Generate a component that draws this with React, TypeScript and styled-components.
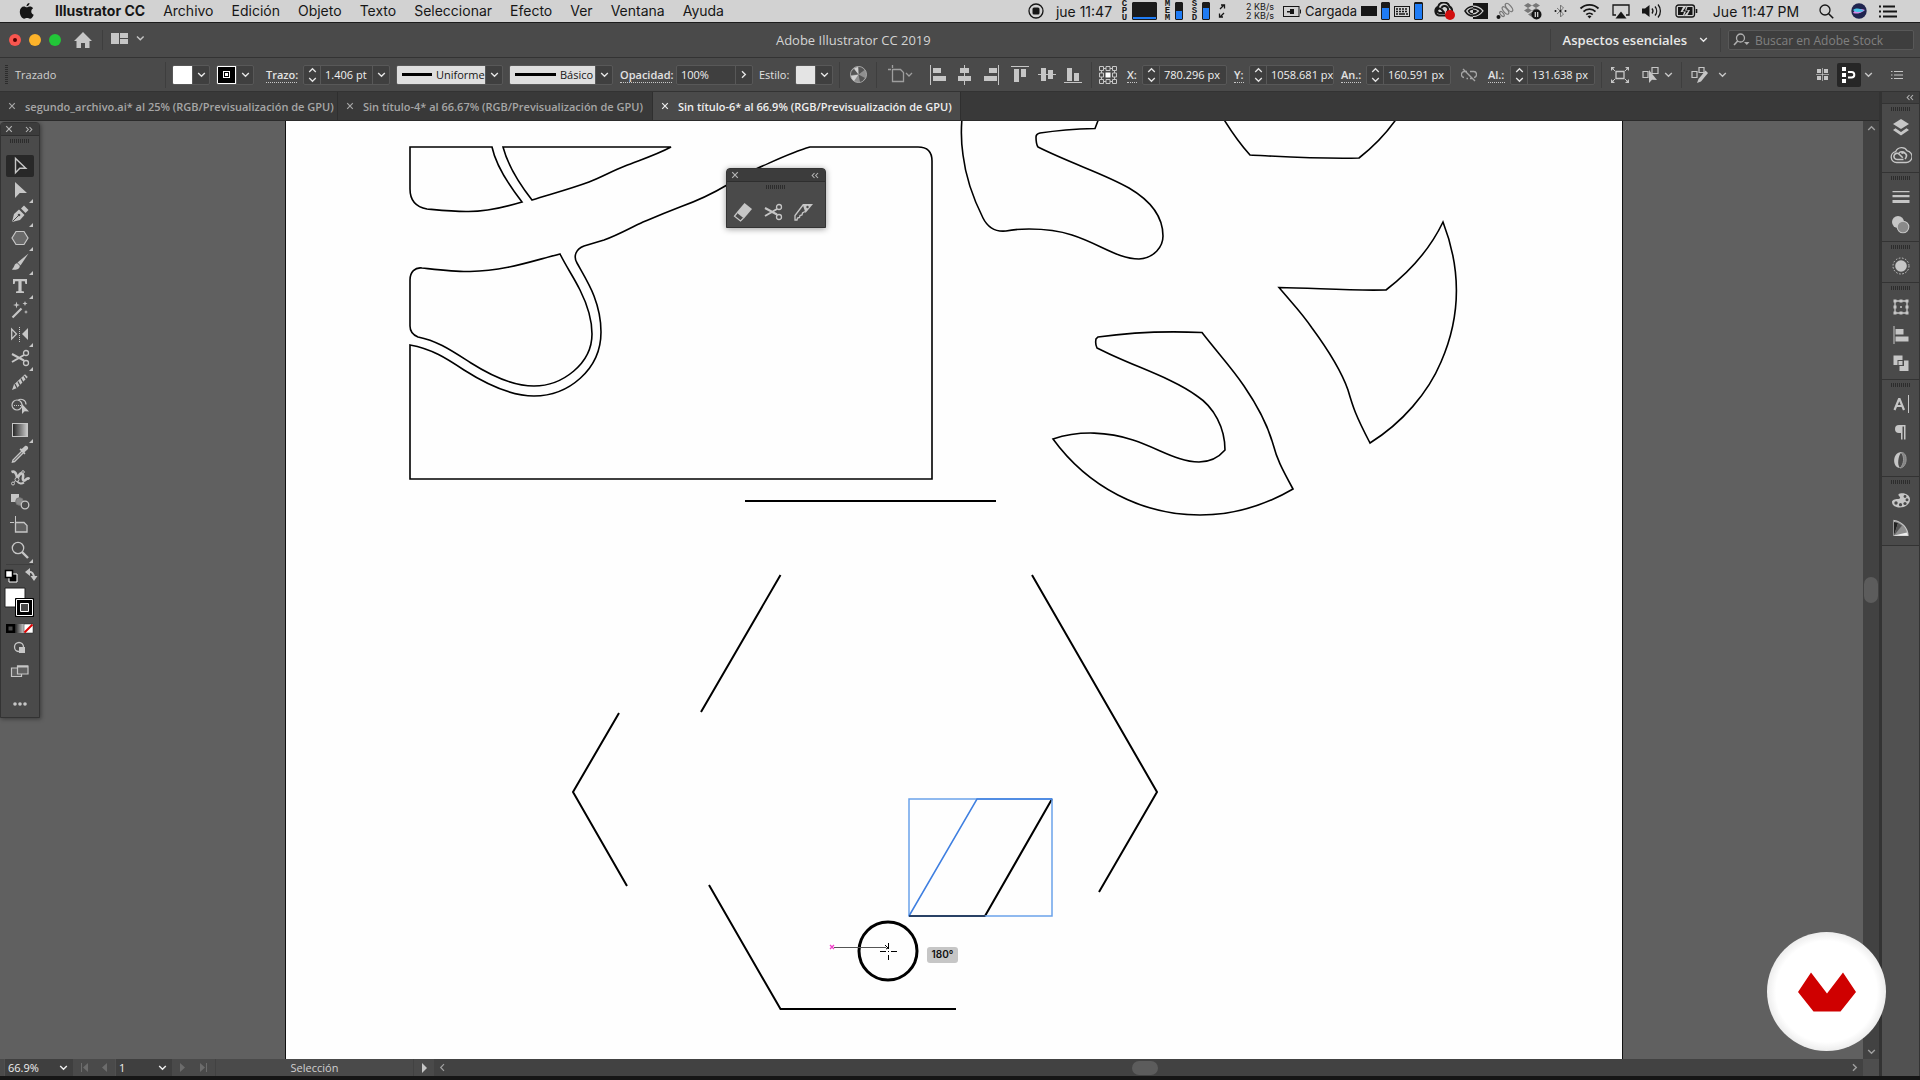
import React from 'react';
import styled, { createGlobalStyle } from 'styled-components';

const ui = '"Open Sans", "Noto Sans", sans-serif';
const mac = 'Inter, Roboto, "Liberation Sans", sans-serif';
const ink = '#c6c6c6';

const Global = createGlobalStyle`
  * { box-sizing: border-box; }
  html, body { margin: 0; height: 100%; background: #161616; overflow: hidden; }
  button, input, select { font: inherit; color: inherit; margin: 0; padding: 0; border: 0; background: none; border-radius: 0; outline: 0; }
  svg { display: block; flex: none; }
`;

const Screen = styled.div`
  display: flex;
  flex-direction: column;
  height: 100vh;
  padding-bottom: 4px;
  background: #161616;
  font-family: ${ui};
  font-size: 12px;
  color: #e2e2e2;
`;

/* ---------- system menu bar ---------- */
const MenuBar = styled.header`
  display: flex;
  align-items: center;
  height: 23px;
  padding: 0 23px 0 18px;
  background: #d2d2d2;
  border-bottom: 1px solid #1c1c1c;
  color: #161616;
  font-family: ${mac};
  font-size: 14px;
`;
const MenuNav = styled.nav`
  display: flex;
  flex: 1;
  gap: 18px;
  margin-left: 20px;
`;
const MenuItem = styled.button<{ $bold?: boolean }>`
  font-weight: ${p => (p.$bold ? 700 : 400)};
  line-height: 22px;
  white-space: nowrap;
`;
const Slot = styled.div<{ $w: number; $gap?: number; $small?: boolean }>`
  display: flex;
  flex: none;
  align-items: center;
  justify-content: center;
  width: ${p => p.$w}px;
  margin-left: ${p => p.$gap ?? 0}px;
  font-size: ${p => (p.$small ? 13 : 14)}px;
  white-space: nowrap;
`;
const Stack = styled(Slot)`
  flex-direction: column;
  font-family: "Liberation Mono", monospace;
  font-size: 9px;
  font-weight: 700;
  line-height: 7px;
`;
const Rates = styled(Slot)`
  flex-direction: column;
  font-size: 9px;
  line-height: 9px;
`;
const Meter = styled.div<{ $w: number; $fill: number; $gap: number }>`
  flex: none;
  width: ${p => p.$w}px;
  height: 18px;
  margin-left: ${p => p.$gap}px;
  background: linear-gradient(to top, #1f7cf5 ${p => p.$fill}%, #1b1b1b ${p => p.$fill}%);
  border: 1px solid #1b1b1b;
  border-radius: 1px;
`;

/* ---------- title bar ---------- */
const TitleBar = styled.div`
  display: flex;
  align-items: center;
  height: 35px;
  padding: 0 6px 0 9px;
  background: #4a4a4a;
  border-bottom: 1px solid #333;
`;
const Light = styled.button<{ $c: string }>`
  display: flex;
  align-items: center;
  justify-content: center;
  width: 12px;
  height: 12px;
  margin-right: 8px;
  border-radius: 50%;
  background: ${p => p.$c};
`;
const LightDot = styled.span`
  width: 4px;
  height: 4px;
  border-radius: 50%;
  background: #4d0000;
`;
const Rule = styled.span<{ $gap?: number; $tall?: number }>`
  flex: none;
  width: 1px;
  height: ${p => p.$tall ?? 26}px;
  margin-left: ${p => p.$gap ?? 0}px;
  background: #3e3e3e;
`;
const IconButton = styled.button<{ $w: number; $gap?: number; $on?: boolean }>`
  display: flex;
  flex: none;
  align-items: center;
  justify-content: center;
  width: ${p => p.$w}px;
  height: 24px;
  margin-left: ${p => p.$gap ?? 0}px;
  border-radius: 2px;
  background: ${p => (p.$on ? '#262626' : 'none')};
  color: ${p => (p.$on ? '#fff' : ink)};
`;
const AppTitle = styled.h1`
  flex: 1;
  margin: 0;
  padding-left: 12px;
  font-size: 13px;
  font-weight: 400;
  line-height: 34px;
  text-align: center;
  color: #d4d4d4;
`;
const Preset = styled.button`
  display: flex;
  align-items: center;
  gap: 12px;
  margin: 0 12px;
  font-size: 13px;
  font-weight: 600;
  color: #e8e8e8;
`;
const StockSearch = styled.label`
  display: flex;
  align-items: center;
  gap: 5px;
  width: 186px;
  height: 20px;
  margin-left: 7px;
  padding: 0 4px;
  background: #3e3e3e;
  border: 1px solid #585858;
  border-radius: 2px;
`;
const SearchInput = styled.input`
  width: 150px;
  font-size: 12px;
  &::placeholder { color: #808080; opacity: 1; }
`;

/* ---------- control bar ---------- */
const ControlBar = styled.div`
  display: flex;
  align-items: center;
  height: 34px;
  padding: 0 17px 0 5px;
  background: #4a4a4a;
  border-bottom: 1px solid #333;
  overflow: hidden;
`;
const Grip = styled.span<{ $row?: boolean }>`
  flex: none;
  width: ${p => (p.$row ? 20 : 3)}px;
  height: ${p => (p.$row ? 4 : 20)}px;
  background: repeating-linear-gradient(${p => (p.$row ? '90deg' : '180deg')}, #2c2c2c 0 1px, transparent 1px 2px);
`;
const Caption = styled.span<{ $w: number }>`
  flex: none;
  width: ${p => p.$w}px;
  margin-left: 7px;
  font-size: 11px;
  color: #d0d0d0;
`;
const FieldName = styled.label<{ $w: number; $gap: number; $plain?: boolean }>`
  flex: none;
  width: ${p => p.$w}px;
  margin-left: ${p => p.$gap}px;
  font-size: 11px;
  font-weight: ${p => (p.$plain ? 400 : 600)};
  line-height: 15px;
  white-space: nowrap;
  border-bottom: 1px ${p => (p.$plain ? 'solid transparent' : 'dotted #c8c8c8')};
`;
const Field = styled.div<{ $w: number; $gap: number }>`
  display: flex;
  flex: none;
  width: ${p => p.$w}px;
  height: 20px;
  margin-left: ${p => p.$gap}px;
  background: #3f3f3f;
  border: 1px solid #585858;
  border-radius: 2px;
  font-size: 11px;
  overflow: hidden;
`;
const FieldInput = styled.input`
  flex: 1;
  min-width: 0;
  padding-left: 4px;
  color: #f0f0f0;
`;
const FieldPart = styled.button<{ $left?: boolean }>`
  display: flex;
  flex: none;
  align-items: center;
  justify-content: center;
  width: 17px;
  border-${p => (p.$left ? 'right' : 'left')}: 1px solid #585858;
`;
const Swatch = styled.span<{ $black?: boolean; $soft?: boolean }>`
  display: flex;
  flex: none;
  align-items: center;
  justify-content: center;
  width: 19px;
  background: ${p => (p.$black ? '#000' : p.$soft ? '#e4e4e4' : '#fff')};
  outline: ${p => (p.$black ? '1px solid #fff' : 'none')};
  outline-offset: -1px;
`;
const SwatchHole = styled.span`
  width: 7px;
  height: 7px;
  border: 1px solid #fff;
  background: #000;
  box-shadow: inset 0 0 0 1px #000, inset 0 0 0 3px #fff;
`;
const Sample = styled.div`
  display: flex;
  flex: 1;
  align-items: center;
  padding-left: 5px;
  background: #dedede;
`;
const Stroke = styled.span<{ $w: number }>`
  flex: none;
  width: ${p => p.$w}px;
  height: 3px;
  background: #000;
`;
const SampleSelect = styled.select`
  flex: 1;
  min-width: 0;
  margin-left: 4px;
  appearance: none;
  color: #161616;
`;
const Spring = styled.span`
  flex: 1;
`;

/* ---------- workspace ---------- */
const Body = styled.div`
  display: flex;
  flex: 1;
  min-height: 0;
`;
const DocColumn = styled.main`
  display: flex;
  flex: 1;
  flex-direction: column;
  min-width: 0;
  border-right: 1px solid #333;
`;
const Tabs = styled.div`
  display: flex;
  height: 29px;
  background: #393939;
  border-bottom: 1px solid #2b2b2b;
`;
const Tab = styled.div<{ $on?: boolean; $w: number }>`
  display: flex;
  flex: none;
  align-items: center;
  gap: 9px;
  width: ${p => p.$w}px;
  padding-left: 8px;
  border-right: 1px solid #2f2f2f;
  background: ${p => (p.$on ? '#4a4a4a' : 'none')};
  color: ${p => (p.$on ? '#efefef' : '#a6a6a6')};
`;
const TabName = styled.button`
  font-size: 11px;
  font-weight: 600;
  white-space: nowrap;
`;
const DocArea = styled.div`
  display: flex;
  flex: 1;
  min-height: 0;
`;
const Canvas = styled.div`
  position: relative;
  flex: 1;
  min-width: 0;
  overflow: hidden;
  background: #606060;
`;
const Artboard = styled.div`
  position: absolute;
  left: 285px;
  top: 0;
  bottom: 0;
  width: 1338px;
  background: #fefefe;
  border: 1px solid #111;
  border-width: 0 1px;
`;
const AngleTip = styled.output`
  position: absolute;
  left: 641px;
  top: 826px;
  width: 31px;
  height: 16px;
  border-radius: 3px;
  background: #c6c6c6;
  color: #111;
  font-family: ${mac};
  font-size: 10px;
  font-weight: 600;
  line-height: 15px;
  text-align: center;
`;
const VScroll = styled.div`
  display: flex;
  flex-direction: column;
  align-items: center;
  justify-content: space-between;
  width: 16px;
  padding: 4px 0;
  background: #424242;
  color: #a0a0a0;
`;
const Thumb = styled.span<{ $wide?: boolean }>`
  width: ${p => (p.$wide ? 26 : 14)}px;
  height: ${p => (p.$wide ? 14 : 26)}px;
  margin-right: ${p => (p.$wide ? 8 : 0)}px;
  border-radius: 7px;
  background: #5c5c5c;
`;

/* ---------- floating panels ---------- */
const ToolPanel = styled.aside`
  position: absolute;
  left: 0;
  top: 1px;
  display: flex;
  flex-direction: column;
  align-items: center;
  width: 40px;
  background: #4a4a4a;
  border: 1px solid #333;
  border-radius: 4px 4px 0 0;
  box-shadow: 1px 1px 4px rgba(0, 0, 0, .4);
`;
const CutPanel = styled.aside`
  position: absolute;
  left: 726px;
  top: 47px;
  display: flex;
  flex-direction: column;
  align-items: center;
  width: 100px;
  height: 60px;
  background: #4a4a4a;
  border: 1px solid #333;
  border-radius: 4px 4px 0 0;
  box-shadow: 0 1px 6px rgba(0, 0, 0, .4);
`;
const PanelHead = styled.div`
  display: flex;
  align-items: center;
  justify-content: space-between;
  align-self: stretch;
  height: 13px;
  margin-bottom: 3px;
  padding: 0 6px 0 4px;
  background: #3c3c3c;
  border-bottom: 1px solid #2e2e2e;
  color: #b4b4b4;
`;
const CutRow = styled.div`
  display: flex;
  align-self: flex-start;
  gap: 10px;
  padding: 13px 0 0 6px;
`;
const Bare = styled.button`
  display: flex;
  align-items: center;
  justify-content: center;
  color: inherit;
`;
const CutTool = styled(Bare)`
  color: ${ink};
`;
const Tool = styled.button<{ $on?: boolean; $more?: boolean }>`
  position: relative;
  display: flex;
  align-items: center;
  justify-content: center;
  width: 28px;
  height: 22px;
  margin-bottom: 2px;
  border-radius: 2px;
  color: ${ink};
  background: ${p => (p.$on ? '#282828' : 'none')};
  &::after {
    content: '';
    position: absolute;
    display: ${p => (p.$more ? 'block' : 'none')};
    right: 1px;
    bottom: -2px;
    border: 2px solid transparent;
    border-right-color: ${ink};
    border-bottom-color: ${ink};
  }
`;
const ToolList = styled.div`
  display: flex;
  flex-direction: column;
  margin-top: 12px;
  padding-bottom: 1px;
  border-bottom: 1px solid #3e3e3e;
`;
const ToolFoot = styled.div`
  display: flex;
  flex-direction: column;
  align-items: center;
`;
const MoreTools = styled(Tool)`
  margin-top: 8px;
`;

/* ---------- dock ---------- */
const Dock = styled.aside`
  width: 40px;
  border: 1px solid #333;
  border-width: 0 1px 0 2px;
  background: #515151;
`;
const DockHead = styled.div`
  display: flex;
  align-items: center;
  justify-content: flex-end;
  height: 12px;
  padding-right: 5px;
  background: #3f3f3f;
  border-bottom: 1px solid #333;
  color: #b4b4b4;
`;
const DockGroup = styled.div`
  display: flex;
  flex-direction: column;
  align-items: center;
  padding: 3px 0 2px;
  background: #4a4a4a;
  border-bottom: 1px solid #333;
`;
const DockButton = styled.button`
  display: flex;
  align-items: center;
  justify-content: center;
  width: 30px;
  height: 28px;
  color: ${ink};
`;
const DockGrip = styled(Grip)`
  margin-bottom: 3px;
`;

/* ---------- status bar ---------- */
const StatusBar = styled.footer`
  display: flex;
  align-items: center;
  height: 17px;
  padding-left: 4px;
  background: #4a4a4a;
  color: #b8b8b8;
`;
const StatusPick = styled.label<{ $w: number }>`
  display: flex;
  flex: none;
  align-items: center;
  width: ${p => p.$w}px;
  height: 17px;
  padding-right: 5px;
  background: #3f3f3f;
  border-left: 1px solid #505050;
  color: #efefef;
`;
const StatusSelect = styled.select`
  flex: 1;
  min-width: 0;
  padding-left: 3px;
  appearance: none;
  font-size: 11px;
`;
const StatusNav = styled.div<{ $w: number }>`
  display: flex;
  align-items: center;
  justify-content: space-around;
  width: ${p => p.$w}px;
  color: #6c6c6c;
`;
const StatusTool = styled.div`
  width: 199px;
  border: 1px solid #424242;
  border-width: 0 1px;
  font-size: 11px;
  line-height: 17px;
  text-align: center;
  color: #d0d0d0;
`;
const HScroll = styled.div`
  display: flex;
  flex: 1;
  align-items: center;
  justify-content: space-between;
  height: 17px;
  padding: 0 5px;
  background: #424242;
  color: #a0a0a0;
`;
const Corner = styled.span`
  width: 16px;
  height: 17px;
  background: #4e4e4e;
`;

const Brand = styled.div`
  position: fixed;
  right: 34px;
  bottom: 29px;
  width: 119px;
  height: 119px;
  border-radius: 50%;
  background: radial-gradient(circle, #fff 60%, #ececec 71%);
  display: flex;
  align-items: center;
  justify-content: center;
`;

/* ---------- drawings ---------- */
type PicProps = { w: number; h: number; children: React.ReactNode };
const Pic = ({ w, h, children }: PicProps) => (
  <svg width={w} height={h} viewBox={`0 0 ${w} ${h}`} fill="none" stroke="currentColor" aria-hidden="true">{children}</svg>
);
const Chevron = () => <Pic w={9} h={6}><path d="M1.2 1l3.3 3.3L7.8 1" strokeWidth="1.4" /></Pic>;
const ChevronUp = () => <Pic w={9} h={6}><path d="M1.2 5l3.3-3.3L7.8 5" strokeWidth="1.4" /></Pic>;
const ChevronRight = () => <Pic w={6} h={9}><path d="M1 1.2l3.3 3.3L1 7.8" strokeWidth="1.4" /></Pic>;
const ChevronLeft = () => <Pic w={6} h={9}><path d="M5 1.2L1.7 4.5 5 7.8" strokeWidth="1.2" /></Pic>;
const Spin = () => <Pic w={9} h={16}><path d="M1.2 5l3.3-3.3L7.8 5M1.2 11l3.3 3.3L7.8 11" strokeWidth="1.3" /></Pic>;
const Cross = () => <Pic w={8} h={8}><path d="M1.2 1.2l5.6 5.6M6.8 1.2L1.2 6.8" strokeWidth="1.2" /></Pic>;
const Fold = () => <Pic w={8} h={7}><path d="M3.5 1L1.2 3.5 3.5 6M7 1L4.7 3.5 7 6" strokeWidth="1.1" /></Pic>;
const Unfold = () => <Pic w={8} h={7}><path d="M1 1l2.3 2.5L1 6M4.5 1l2.3 2.5L4.5 6" strokeWidth="1.1" /></Pic>;

const F = { fill: 'currentColor', stroke: 'none' };

const Scissors = () => (
  <g><path d="M2 6l12 6.5M2 14L14 7" strokeWidth="2" /><circle cx="16" cy="5" r="2.500" strokeWidth="1.300" /><circle cx="16" cy="15" r="2.500" strokeWidth="1.300" /></g>
);

const tools: { name: string; more?: boolean; art: React.ReactNode }[] = [
  { name: 'Selección', art: <path d="M5.5 2.500v14.200l4.300-4.400h6L5.500 2.500z" strokeWidth="1.400" /> },
  { name: 'Selección directa', more: true, art: <path d="M5 2v16l4.700-5H17z" {...F} /> },
  { name: 'Pluma', more: true, art: <g {...F}><path d="M2 18l2-8 5-4.500L14.500 11 10 16z" /><path d="M11 4.500l3-3 4.500 4.500-3 3z" /><path d="M2.500 17.500L9 11" stroke="#4a4a4a" strokeWidth="1" /><circle cx="9" cy="11" r="1.300" fill="#4a4a4a" /></g> },
  { name: 'Polígono', more: true, art: <path d="M6 3.500h8l4 6.500-4 6.500H6L2 10z" fill="#6a6a6a" strokeWidth="1.200" /> },
  { name: 'Pincel', more: true, art: <g {...F}><path d="M18.500 1.500L7.500 10.500l3 3z" /><path d="M7.300 11.300C4 11 5 15 1.800 17.500c4 1 8.200-.2 8-3.700z" /></g> },
  { name: 'Texto', more: true, art: <path d="M3 3h14v5h-1.600l-.6-2.700h-3.200V15l2.400.6V17H6v-1.400l2.400-.6V5.300H5.200L4.600 8H3z" {...F} /> },
  { name: 'Varita mágica', art: <g><path d="M2.500 17.500l9-9" strokeWidth="2.200" /><path d="M6.500 1.500l.8 2.700L10 5l-2.700.8-.8 2.700-.8-2.700L3 5l2.700-.8zM16 10l.6 1.400 1.400.6-1.400.6L16 14l-.6-1.400L14 12l1.400-.6zM15 1l.7 1.800 1.800.7-1.800.7L15 6l-.7-1.800-1.800-.7 1.800-.7z" {...F} /></g> },
  { name: 'Reflejo', more: true, art: <g><path d="M1.700 5v10l4.800-5z" strokeWidth="1.300" /><path d="M18 4v12l-6-6z" {...F} /><path d="M9.500 3v15" strokeDasharray="1 1" /></g> },
  { name: 'Tijeras', more: true, art: <Scissors /> },
  { name: 'Ancho', art: <g><path d="M2 18l2-5.500 11-10.300 2.800 2.800L7 16z" {...F} /><path d="M5 12l2 4M8 9.500l2 4M11 6.500l2 4M14 4l2 3" stroke="#4a4a4a" strokeWidth="1.300" /></g> },
  { name: 'Creador de formas', art: <g><circle cx="7" cy="9" r="5" strokeWidth="1.200" /><path d="M8 4.500c2.500-2.500 8-1 8 4" strokeWidth="1.200" /><path d="M4 9.500h9" strokeDasharray="1 1" /><path d="M12 8v10l2.700-2.700 4.300.2z" {...F} /></g> },
  { name: 'Degradado', more: true, art: <rect x="2.500" y="3.500" width="15" height="13" fill="url(#toolGradient)" /> },
  { name: 'Cuentagotas', art: <g><path d="M12 7L3 16l-.5 2 2-.5L13.500 8.500" strokeWidth="1.400" /><path d="M9.500 5.500l5 5 1-1.200-1-1L18 5c1-2-1.500-4-3.300-2.800L11.700 5l-1-.8z" {...F} /></g> },
  { name: 'Deformar', art: <g><path d="M1.500 4c4-2 5 3 6 7 1-4 3-7 5-5 2 2-1 5 1 6.500s3-4 6-1.500" strokeWidth="2.600" /><path d="M3 15.500L13 4" strokeWidth="1" /><path d="M7 13c2 3 5 3 7 1.500" strokeWidth="2" /><circle cx="3" cy="15.500" r="1.500" fill="#4a4a4a" /><circle cx="7" cy="11.500" r="2" fill="#4a4a4a" /><circle cx="13" cy="4" r="1.300" fill="#4a4a4a" /></g> },
  { name: 'Fusión', art: <g><path d="M1 2h8v8H1z" {...F} /><circle cx="9.500" cy="9.500" r="3.800" fill="#888" stroke="#777" /><circle cx="15" cy="13" r="3.800" fill="#4a4a4a" strokeWidth="1.300" /></g> },
  { name: 'Mesa de trabajo', art: <g><path d="M5.500 0v6M0 6.500h4" /><path d="M5.500 6.500H14l3 3V16H5.500z" fill="#606060" strokeWidth="1.300" /></g> },
  { name: 'Zoom', more: true, art: <g><circle cx="8" cy="8" r="5.700" strokeWidth="1.300" /><path d="M12 12l6 6" strokeWidth="2.400" /></g> },
];

const dockGroups: { name: string; art: React.ReactNode }[][] = [
  [
    { name: 'Capas', art: <g {...F}><path d="M11 2l8 5-8 5-8-5z" /><path d="M3 13l2.500-1.700L11 15l5.500-3.700L19 13l-8 5.500z" /></g> },
    { name: 'Bibliotecas', art: <g><path d="M6.500 17.500a5.500 5.500 0 0 1-.8-10.900 6.500 6.500 0 0 1 11.500-.8A5.900 5.900 0 0 1 16 17.500z" strokeWidth="1.300" /><path d="M13.500 14.500H7a3.100 3.100 0 1 1 2.200-5.300l3.600 3.600M9 8a4.200 4.200 0 1 1 6 6M11.500 8.500a3 3 0 0 1 4.700 3.500" strokeWidth="1.600" /></g> },
  ],
  [
    { name: 'Trazo', art: <path d="M2.500 5h17v1.200h-17zM2.500 9h17v2.200h-17zM2.500 14h17v3h-17z" {...F} /> },
    { name: 'Transparencia', art: <g><circle cx="8" cy="8" r="6" {...F} /><circle cx="13" cy="13" r="5.800" fill="#8a8a8a" strokeWidth="1.100" /></g> },
  ],
  [{ name: 'Apariencia', art: <g><circle cx="11" cy="11" r="5.800" {...F} /><circle cx="11" cy="11" r="8" strokeDasharray="1.600 1.600" /></g> }],
  [
    { name: 'Transformar', art: <g><path d="M5 5h12v12H5z" strokeWidth="1.300" /><path d="M3.500 3.500h3v3h-3zM9.500 3.500h3v3h-3zM15.500 3.500h3v3h-3zM3.500 9.500h3v3h-3zM15.500 9.500h3v3h-3zM3.500 15.500h3v3h-3zM9.500 15.500h3v3h-3zM15.500 15.500h3v3h-3zM10 10.500h2v1h-2zM10.500 10h1v2h-1z" {...F} /></g> },
    { name: 'Alinear', art: <path d="M3.500 2h1v18h-1zM5.500 5h8v5.500h-8zM5.500 12.500h13v5h-13z" {...F} /> },
    { name: 'Buscatrazos', art: <path d="M3.500 3.500h9V8h-5v5h-4zM14 8.500h4.500V19h-9v-5H14zM8.500 9h4v4h-4z" {...F} /> },
  ],
  [
    { name: 'Carácter', art: <g><path d="M4.500 17l4.500-11h.6L14 17M6.500 13h6" strokeWidth="2.200" /><path d="M18.500 2v18" /></g> },
    { name: 'Párrafo', art: <path d="M9 4h6.500v14.500H14V5.500h-1.500v13H11V12H9a4 4 0 0 1 0-8z" {...F} /> },
    { name: 'OpenType', art: <g><path d="M11 3.500c7-1 7 15-1 15.500 4-3 5-12 1-15.500z" fill="#848484" stroke="#999" /><path d="M11.500 3C2 3 2 19 10 19c-3-3-2-12 1.500-16z" {...F} /></g> },
  ],
  [
    { name: 'Color', art: <g><path d="M10 3.500c5-1 10 1.500 10 6 0 4.500-5 8-10 8-5 0-8-2.500-8-5.500 0-2 3-3 5.500-3 3 0 3-1.500 2-2.500s-2-2.500.5-3z" {...F} /><g fill="#4a4a4a" stroke="none"><circle cx="6" cy="13" r="1.700" /><circle cx="10.500" cy="14.700" r="1.600" /><circle cx="15" cy="13.500" r="1.600" /><circle cx="17" cy="9.800" r="1.500" /><circle cx="15" cy="6.500" r="1.400" /></g></g> },
    { name: 'Guía de color', art: <g><path d="M4 2.500a16 16 0 0 1 14 15H4z" fill="#8f8f8f" strokeWidth="1.200" /><path d="M4 17.500V4l4 1z" fill="#222" stroke="none" /><path d="M4 17.500L8 5l4 2.500z" fill="#555" stroke="none" /><path d="M4 17.500l13-3 1 3z" fill="#eee" stroke="none" /></g> },
  ],
];

const aligns = [
  { name: 'Alinear a la izquierda', gap: 14, d: 'M1 0h1v20H1zM4 3h8v5H4zM4 11h13v5H4z' },
  { name: 'Centrar horizontalmente', gap: 7, d: 'M9 0h1v20H9zM5 3h9v5H5zM3 11h13v5H3z' },
  { name: 'Alinear a la derecha', gap: 8, d: 'M16 0h1v20h-1zM7 3h8v5H7zM2 11h13v5H2z' },
  { name: 'Alinear arriba', gap: 10, d: 'M0 1h18v1H0zM3 4h5v13H3zM10 4h5v8h-5z' },
  { name: 'Centrar verticalmente', gap: 8, d: 'M0 9h18v1H0zM3 3h5v13H3zM10 5h5v9h-5z' },
  { name: 'Alinear abajo', gap: 7, d: 'M0 17h18v1H0zM3 3h5v13H3zM10 8h5v8h-5z' },
];

const Artwork = () => (
  <svg width="1336" height="938" viewBox="286 121 1336 938" fill="none" stroke="#000" strokeWidth="1.600">
    <path d="M410 147H492C496 166 508 184 522 202C502 208 484 212 466 211.500C452 211.500 438 210 427 209C416 207 410 200 410 189Z" />
    <path d="M503 147H671C656 155 640 160 625 166C612 171 602 177 589 182C570 189 551 194 532 200C518 182 508 166 503 147Z" />
    <path d="M422 268C450 271 458 272 470 271.500C505 271 532 261 560 254C567 268 573 276 580 290C588 306 592 320 592 334C592 364 562 386 534 386C514 386 490 375 471 363C452 351 438 341 418 337C413 335 410 331 410 326V280C410 272 415 267 422 268Z" />
    <path d="M410 345V479H932V161C932 152 927 147 918 147H810C792 152 772 162 758 168C745 174 736 180 727 185C712 194 694 202 680 207C662 214 655 217 643 222C630 228 618 235 604 240L584 246C576 249 573 256 577 263C582 272 590 285 594 296C599 309 601 321 601 332C601 370 568 396 534 396C512 396 486 384 464 370C446 358 432 349 410 345Z" />
    <path d="M962 118C961 130 961 142 963 155C966 180 974 200 983 218C988 228 996 232 1006 231C1015 229 1022 229 1029 229C1045 229 1060 231 1072 235C1100 244 1118 259 1139 259C1154 258 1163 247 1163 236C1163 214 1146 198 1129 188C1105 174 1072 164 1038 147C1036 144 1036 140 1036 137Q1036 134 1040 133C1060 130 1078 129 1095 128.500L1099 118" />
    <path d="M1223 118C1231 131 1240 144 1250 155C1290 157 1320 159 1359 158C1373 147 1386 134 1397 118" />
    <path d="M1443 222C1431 247 1412 270 1386 290C1350 291 1315 288 1279 287.500C1292 303 1302 313 1312 328C1326 347 1341 370 1348 390C1353 407 1355 414 1370 443C1402 423 1428 393 1441 362C1462 314 1460 266 1443 222Z" />
    <path d="M1202 332.500C1217 352 1232 368 1244 386C1257 405 1267 423 1273 444C1277 459 1281 467 1293 489C1264 506 1233 515 1200 515C1142 515 1088 487 1053 439C1080 430 1109 432 1133 440C1160 449 1178 462 1199 462C1210 462 1219 457 1225 450C1225 428 1214 407 1197 396C1171 377 1132 366 1097 348Q1095 344 1096 339L1098 337C1133 332 1168 331 1202 332.500Z" />
    <g strokeWidth="2">
      <path d="M745 501H996M780.500 575L701 712M1032 575L1157 792L1099 892M619 713L573 792L627 886M709 885L780.500 1009H956" />
      <path d="M909 916H985L1052 799" />
    </g>
    <g strokeWidth="1.500">
      <path d="M909 799H1052V916H909Z" stroke="#6ba2ea" />
      <path d="M909 916L977 799H1052" stroke="#3f7fe0" />
      <path d="M909 916H985" stroke="#1c2f4d" />
    </g>
    <circle cx="888" cy="951" r="29" strokeWidth="3" />
    <path d="M834 947.500H886" stroke="#555" strokeWidth="1" />
    <path d="M830 945l4 4M834 945l-4 4" stroke="#f03cc8" strokeWidth="1.300" />
    <path d="M885 945l3 3-2 1M888.500 943v6M880 951.500h6M891 951.500h6M888.500 955v5M888 951.500h1" strokeWidth="1" />
  </svg>
);

type NumberProps = { id: string; name: string; value: string; w: number; gap: number };
const NumberField = ({ id, name, value, w, gap }: NumberProps) => (
  <>
    <FieldName htmlFor={id} $w={w} $gap={gap}>{name}</FieldName>
    <Field $w={85} $gap={5}>
      <FieldPart $left aria-label={`Ajustar ${name}`}><Spin /></FieldPart>
      <FieldInput id={id} defaultValue={value} />
    </Field>
  </>
);

export default function App() {
  return (
    <Screen>
      <Global />
      <MenuBar>
        <Pic w={17} h={18}><path d="M11.500 1c.1 1.700-1.400 3.300-3 3.300C8.300 2.700 9.800 1.200 11.500 1zM8.700 5.300c.8 0 1.700-.8 3.200-.8 1.300 0 2.500.7 3.200 1.700-2.700 1.600-2.300 5.400.6 6.500-.7 1.800-2.100 4-3.700 4-1.200 0-1.500-.7-2.900-.7s-1.800.7-2.900.7C4 16.700 1.800 13 1.800 9.700c0-3.200 2-5.200 4.100-5.200 1.300 0 2.100.8 2.800.8z" {...F} /></Pic>
        <MenuNav>
          <MenuItem $bold>Illustrator CC</MenuItem>
          {['Archivo', 'Edición', 'Objeto', 'Texto', 'Seleccionar', 'Efecto', 'Ver', 'Ventana', 'Ayuda'].map(m => <MenuItem key={m}>{m}</MenuItem>)}
        </MenuNav>
        <Slot $w={16}><Pic w={16} h={16}><circle cx="8" cy="8" r="7" strokeWidth="1.300" /><rect x="4.500" y="4.500" width="7" height="7" rx="1.500" {...F} /></Pic></Slot>
        <Slot $w={58} $gap={11}>jue 11:47</Slot>
        <Stack $w={7} $gap={8}><span>C</span><span>P</span><span>U</span></Stack>
        <Meter $w={25} $fill={12} $gap={4} />
        <Stack $w={7} $gap={7}><span>M</span><span>E</span><span>M</span></Stack>
        <Meter $w={8} $fill={50} $gap={4} />
        <Stack $w={7} $gap={8}><span>S</span><span>S</span><span>D</span></Stack>
        <Meter $w={8} $fill={70} $gap={4} />
        <Slot $w={8} $gap={8}><Pic w={8} h={14}><path d="M2 5l4-4M3 1h3.500v3.500M6 9l-4 4M1.500 9.500V13H5" strokeWidth="1.300" /></Pic></Slot>
        <Rates $w={30} $gap={19}><span>2 KB/s</span><span>2 KB/s</span></Rates>
        <Slot $w={18} $gap={8}><Pic w={18} h={11}><rect x=".5" y=".5" width="15.500" height="10" /><path d="M17.500 3.500v4" /><path d="M4 5h3V3h4v5H7V6.500H4z" {...F} /></Pic></Slot>
        <Slot $w={50} $gap={5} $small>Cargada</Slot>
        <Slot $w={16} $gap={5}><Pic w={16} h={10}><rect width="16" height="10" {...F} /></Pic></Slot>
        <Meter $w={9} $fill={70} $gap={4} />
        <Slot $w={16} $gap={4}><Pic w={16} h={11}><rect x=".5" y=".5" width="15" height="10" /><path d="M2 3h12M2 5.500h12M2 8h2M12 8h2" strokeDasharray="2 1" strokeWidth="1.500" /><path d="M5 8h6" strokeWidth="1.500" /></Pic></Slot>
        <Meter $w={9} $fill={94} $gap={4} />
        <Slot $w={22} $gap={10}><Pic w={22} h={18}><path d="M6 13.500A4.500 4.500 0 0 1 5 5a6 6 0 0 1 11.500-.5A5 5 0 0 1 16 13.500zM12 11H6.500a2.300 2.300 0 1 1 2-3.500l3 3.500M8.500 6a3.500 3.500 0 1 1 5 4.500" strokeWidth="2" /><circle cx="17" cy="13" r="5" fill="#d20f0f" stroke="none" /></Pic></Slot>
        <Slot $w={24} $gap={9}><Pic w={24} h={16}><path d="M9 0h15v16H9z" {...F} /><path d="M9 3.500C4 3.500 1 8 1 8s3 5 8 5M9 6C6 6 4.500 8 4.500 8S6 11 9 11c2 0 4-3 4-3S11 6 9 6z" strokeWidth="1.500" /><path d="M9 3.200c6 0 10 4.800 10 4.800s-4 5.500-10 5.500M9 6c3 0 5.500 2 5.500 2s-2.500 2.800-5.500 2.800" stroke="#d2d2d2" strokeWidth="1.200" /></Pic></Slot>
        <Slot $w={18} $gap={8}><Pic w={18} h={18}><g stroke="#777" strokeWidth="1.200"><ellipse cx="6" cy="12" rx="1.500" ry="3" transform="rotate(-40 6 12)" /><ellipse cx="9.500" cy="8.500" rx="2" ry="4.500" transform="rotate(-40 9.500 8.500)" /><ellipse cx="13" cy="5.500" rx="2.300" ry="5" transform="rotate(-40 13 5.500)" /></g><circle cx="2.500" cy="15" r="2" {...F} /></Pic></Slot>
        <Slot $w={19} $gap={9}><Pic w={19} h={18}><path d="M5 1l4 2.500L5 6 1 3.500zM13 1l4 2.500L13 6 9 3.500zM5 6l4 2.500L5 11 1 8.500zM13 6l4 2.500L13 11 9 8.500zM9 10l4 2.500L9 15l-4-2.500z" fill="#777" stroke="none" /><circle cx="13.500" cy="12.500" r="5" {...F} /><path d="M12.300 10v5M14.700 10v5" stroke="#ddd" strokeWidth="1.200" /></Pic></Slot>
        <Slot $w={13} $gap={12}><Pic w={13} h={14}><path d="M3 4l6.500 6L6.500 13V1l3 3L3 10" stroke="#777" /><circle cx="1.500" cy="7" r="1" {...F} /><circle cx="6.500" cy="7" r="1" {...F} /><circle cx="11.500" cy="7" r="1" {...F} /></Pic></Slot>
        <Slot $w={21} $gap={12}><Pic w={21} h={16}><path d="M1.500 5.500a13 13 0 0 1 18 0M4.500 8.700a8.500 8.500 0 0 1 12 0M7.300 11.700a4.600 4.600 0 0 1 6.400 0" strokeWidth="1.800" /><path d="M10.500 15.500l-2-2.200a3 3 0 0 1 4 0z" {...F} /></Pic></Slot>
        <Slot $w={18} $gap={12}><Pic w={18} h={15}><path d="M4 11H1V1h16v10h-3" strokeWidth="1.300" /><path d="M9 7.500l5.500 7h-11z" {...F} /></Pic></Slot>
        <Slot $w={20} $gap={12}><Pic w={20} h={16}><path d="M0 5.500h3L7.500 2v12L3 10.500H0z" {...F} /><path d="M10 5.500a4 4 0 0 1 0 5M13 3.500a7 7 0 0 1 0 9M16 1.500a10 10 0 0 1 0 13" strokeWidth="1.300" /></Pic></Slot>
        <Slot $w={23} $gap={13}><Pic w={23} h={14}><rect x="1" y="1" width="18.500" height="12" rx="2.500" strokeWidth="1.300" /><path d="M21.500 5v4" strokeWidth="1.600" /><path d="M3 3h5L5.500 8H9l-1 3H3zM17.500 3v8h-5L15 6h-3.500l1-3z" {...F} /><path d="M11.500 2L7.500 7.500H11L9 12l4.500-5.500H10z" {...F} /></Pic></Slot>
        <Slot $w={86} $gap={15}>Jue 11:47 PM</Slot>
        <Slot $w={15} $gap={20}><Pic w={15} h={15}><circle cx="6" cy="6" r="5" strokeWidth="1.300" /><path d="M9.700 9.700l4.500 4.500" strokeWidth="1.600" /></Pic></Slot>
        <Slot $w={16} $gap={17}><Pic w={16} h={16}><circle cx="8" cy="8" r="7.700" fill="#20244f" stroke="none" /><path d="M2 10c2-4 8-5 12-3-2 1-5 5-12 3z" fill="#d58be8" stroke="none" /><path d="M2 7c4-3 8-1 11 1-4 1-8 2-11-1z" fill="#49c4e8" stroke="none" /></Pic></Slot>
        <Slot $w={18} $gap={12}><Pic w={18} h={13}><path d="M0 1.500h2M4 1.500h12M0 6.500h2M4 6.500h14M0 11.500h2M4 11.500h14" strokeWidth="1.800" /></Pic></Slot>
      </MenuBar>

      <TitleBar>
        <Light $c="#f9564f" aria-label="Cerrar ventana"><LightDot /></Light>
        <Light $c="#fdb32a" aria-label="Minimizar" />
        <Light $c="#22c638" aria-label="Ampliar" />
        <IconButton $w={20} $gap={4} aria-label="Inicio"><Pic w={18} h={18}><path d="M9 1l9 9h-2.500v7h-4.500v-5H7v5H2.500v-7H0z" {...F} /></Pic></IconButton>
        <Rule $gap={9} $tall={20} />
        <IconButton $w={34} $gap={8} aria-label="Organizar documentos"><Pic w={34} h={16}><path d="M0 1h8v11H0zM9 1h8v5H9zM9 7h8v5H9z" {...F} /><path d="M26 4.500l3.300 3.300 3.300-3.300" strokeWidth="1.400" /></Pic></IconButton>
        <AppTitle>Adobe Illustrator CC 2019</AppTitle>
        <Rule $tall={22} />
        <Preset>Aspectos esenciales<Chevron /></Preset>
        <Rule $tall={24} />
        <StockSearch>
          <Pic w={17} h={14}><circle cx="7.500" cy="5" r="4" stroke="#b0b0b0" strokeWidth="1.300" /><path d="M4.700 8L1 12" stroke="#b0b0b0" strokeWidth="1.600" /><path d="M11 9h5.500l-2.700 3z" fill="#b0b0b0" stroke="none" /></Pic>
          <SearchInput aria-label="Buscar en Adobe Stock" placeholder="Buscar en Adobe Stock" />
        </StockSearch>
      </TitleBar>

      <ControlBar>
        <Grip />
        <Caption $w={150}>Trazado</Caption>
        <Rule />
        <Field $w={38} $gap={6}><Swatch /><FieldPart aria-label="Relleno"><Chevron /></FieldPart></Field>
        <Field $w={38} $gap={6}><Swatch $black><SwatchHole /></Swatch><FieldPart aria-label="Color de trazo"><Chevron /></FieldPart></Field>
        <FieldName htmlFor="trazo" $w={31} $gap={12}>Trazo:</FieldName>
        <Field $w={87} $gap={6}>
          <FieldPart $left aria-label="Ajustar trazo"><Spin /></FieldPart>
          <FieldInput id="trazo" defaultValue="1.406 pt" />
          <FieldPart aria-label="Grosor de trazo"><Chevron /></FieldPart>
        </Field>
        <Field $w={107} $gap={6}>
          <Sample><Stroke $w={30} /><SampleSelect aria-label="Perfil"><option>Uniforme</option></SampleSelect></Sample>
          <FieldPart aria-label="Perfiles"><Chevron /></FieldPart>
        </Field>
        <Field $w={104} $gap={6}>
          <Sample><Stroke $w={41} /><SampleSelect aria-label="Pincel"><option>Básico</option></SampleSelect></Sample>
          <FieldPart aria-label="Pinceles"><Chevron /></FieldPart>
        </Field>
        <FieldName htmlFor="opacidad" $w={52} $gap={7}>Opacidad:</FieldName>
        <Field $w={77} $gap={4}><FieldInput id="opacidad" defaultValue="100%" /><FieldPart aria-label="Opacidad"><ChevronRight /></FieldPart></Field>
        <FieldName $plain $w={30} $gap={6}>Estilo:</FieldName>
        <Field $w={38} $gap={6}><Swatch $soft /><FieldPart aria-label="Estilo"><Chevron /></FieldPart></Field>
        <Rule $gap={6} />
        <IconButton $w={18} $gap={9} aria-label="Volver a colorear"><Pic w={17} h={17}><circle cx="8.500" cy="8.500" r="8" fill="#8f8f8f" stroke="#aaa" /><path d="M8.500 8.500V1a7.500 7.500 0 0 1 6 3zM8.500 8.500L15 12a7.500 7.500 0 0 1-5 4zM8.500 8.500L1 9a7 7 0 0 1 3-6z" fill="#555" stroke="none" /><path d="M8.500 8.500L4 15a7.500 7.500 0 0 1-3-5zM8.500 8.500L4 2.500 8 1z" fill="#d0d0d0" stroke="none" /></Pic></IconButton>
        <Rule $gap={9} />
        <IconButton $w={26} $gap={11} aria-label="Documento"><Pic w={26} h={20}><path d="M4.500 4.500h8l3 3v9h-11zM4.500 0v3M0 4.500h3" stroke="#9e9e9e" strokeWidth="1.300" /><path d="M18 8l3 3 3-3" stroke="#9e9e9e" strokeWidth="1.300" /></Pic></IconButton>
        {aligns.map(a => (
          <IconButton key={a.name} $w={19} $gap={a.gap} aria-label={a.name}><Pic w={18} h={20}><path d={a.d} {...F} /></Pic></IconButton>
        ))}
        <Rule $gap={9} />
        <IconButton $w={20} $gap={6} aria-label="Punto de referencia"><Pic w={20} h={20}><path d="M1.500 1.500h4v4h-4zM8 1.500h4v4H8zM14.500 1.500h4v4h-4zM1.500 8h4v4h-4zM14.500 8h4v4h-4zM1.500 14.500h4v4h-4zM8 14.500h4v4H8zM14.500 14.500h4v4h-4zM5.500 3.500H8M12 3.500h2.500M5.500 16.500H8M12 16.500h2.500M3.500 5.500V8M3.500 12v2.500M16.500 5.500V8M16.500 12v2.500" /><path d="M7.500 7.500h5v5h-5z" fill="#fff" stroke="none" /></Pic></IconButton>
        <NumberField id="x" name="X:" value="780.296 px" w={10} gap={9} />
        <NumberField id="y" name="Y:" value="1058.681 px" w={10} gap={7} />
        <NumberField id="an" name="An.:" value="160.591 px" w={20} gap={7} />
        <IconButton $w={16} $gap={10} aria-label="Restringir proporciones"><Pic w={16} h={14}><path d="M6 3.500H4a3 3 0 0 0-1 6M9 3.500h3a3 3 0 0 1 1 6M5.500 10.500H7M9 10.500h2M2 1l12 12" stroke="#a5a5a5" strokeWidth="1.400" /></Pic></IconButton>
        <NumberField id="al" name="Al.:" value="131.638 px" w={17} gap={11} />
        <Rule $gap={6} />
        <IconButton $w={18} $gap={9} aria-label="Aislar"><Pic w={18} h={16}><path d="M5 4.500h8v7H5z" strokeWidth="1.300" /><path d="M0 0h4L0 4zM18 0v4l-4-4zM0 16v-4l4 4zM18 16h-4l4-4z" {...F} /><path d="M1 1l3 3M17 1l-3 3M1 15l3-3M17 15l-3-3" /></Pic></IconButton>
        <IconButton $w={18} $gap={13} aria-label="Seleccionar similares"><Pic w={18} h={18}><path d="M1 5.500h5v6H1zM10 1.500h6v6h-6z" strokeWidth="1.200" /><path d="M7 4v13l3-3.200 5 .2z" {...F} /></Pic></IconButton>
        <IconButton $w={9} $gap={4} aria-label="Más similares"><Chevron /></IconButton>
        <Rule $gap={8} />
        <IconButton $w={18} $gap={9} aria-label="Editar similares"><Pic w={18} h={18}><path d="M1 5.500h5v6H1zM8 1.500h5v5H8z" strokeWidth="1.200" /><path d="M14.500 4.500l2.500 2.500-7 8.500-4 1.500L7.500 13z" {...F} /></Pic></IconButton>
        <IconButton $w={9} $gap={9} aria-label="Más edición"><Chevron /></IconButton>
        <Spring />
        <IconButton $w={16} aria-label="Cuadrícula"><Pic w={14} h={14}><path d="M1 1h4v4H1zM8 1h4v4H8zM1 8h4v4H1zM8 8h4v4H8z" {...F} /><path d="M0 6.500h13M6.500 0v13" strokeWidth=".7" /></Pic></IconButton>
        <IconButton $w={24} $gap={6} $on aria-label="Ajustar a píxel"><Pic w={16} h={16}><path d="M1 0h4v4H1zM1 6h4v4H1zM1 12h4v4H1z" {...F} /><path d="M7 5h3.500a2.800 2.800 0 0 1 0 5.600H7" strokeWidth="2" /></Pic></IconButton>
        <IconButton $w={10} $gap={2} aria-label="Opciones de ajuste"><Chevron /></IconButton>
        <IconButton $w={12} $gap={18} aria-label="Menú del panel"><Pic w={12} h={10}><path d="M0 1.500h1.500M3 1.500h9M0 5h1.500M3 5h9M0 8.500h1.500M3 8.500h9" strokeWidth="1.200" /></Pic></IconButton>
      </ControlBar>

      <Body>
        <DocColumn>
          <Tabs>
            <Tab $w={338}><Bare aria-label="Cerrar"><Cross /></Bare><TabName>segundo_archivo.ai* al 25% (RGB/Previsualización de GPU)</TabName></Tab>
            <Tab $w={315}><Bare aria-label="Cerrar"><Cross /></Bare><TabName>Sin título-4* al 66.67% (RGB/Previsualización de GPU)</TabName></Tab>
            <Tab $w={308} $on><Bare aria-label="Cerrar"><Cross /></Bare><TabName>Sin título-6* al 66.9% (RGB/Previsualización de GPU)</TabName></Tab>
          </Tabs>
          <DocArea>
            <Canvas>
              <Artboard>
                <Artwork />
                <AngleTip>180°</AngleTip>
              </Artboard>
              <ToolPanel>
                <PanelHead><Bare aria-label="Cerrar panel"><Cross /></Bare><Bare aria-label="Expandir panel"><Unfold /></Bare></PanelHead>
                <Grip $row />
                <svg width="0" height="0"><defs><linearGradient id="toolGradient"><stop offset="0" stopColor="#222" /><stop offset="1" stopColor="#ccc" /></linearGradient></defs></svg>
                <ToolList>
                  {tools.map((t, i) => <Tool key={t.name} $on={i === 0} $more={t.more} aria-label={t.name}><Pic w={20} h={20}>{t.art}</Pic></Tool>)}
                </ToolList>
                <ToolFoot>
                  <Bare aria-label="Relleno y trazo"><Pic w={38} h={72}>
                    <path d="M8 9h8v8H8z" fill="#000" stroke="#fff" /><path d="M4.500 5.500h7v7h-7z" fill="#fff" stroke="#000" strokeWidth="1.500" />
                    <path d="M27 7c4-1 6 2 6 6" stroke={ink} strokeWidth="2" /><path d="M29 3v8l-5-4zM29.500 11h7L33 16z" fill={ink} stroke="none" />
                    <path d="M4 23h20v19H4z" fill="#fff" stroke="#222" />
                    <path d="M14.500 33.500h18v18h-18z" fill="#000" stroke="#000" /><path d="M15.500 34.500h16v16h-16z" fill="#000" stroke="#fff" /><path d="M19.500 38.500h8v8h-8z" fill="#4a4a4a" stroke="#fff" />
                    <path d="M5 59h9v9H5z" fill="#000" stroke="none" /><path d="M7.500 61.500h4v4h-4z" fill="#4a4a4a" stroke="none" />
                    <path d="M14 59h9v9h-9z" fill="url(#toolGradient)" stroke="none" /><path d="M23 59h9v9h-9z" fill="#fff" stroke="#222" strokeWidth=".5" /><path d="M23.500 67.500l8-8" stroke="#d00" strokeWidth="2" />
                  </Pic></Bare>
                  <Tool aria-label="Modo de dibujo"><Pic w={20} h={20}><circle cx="9" cy="9" r="4.500" strokeWidth="1.300" /><path d="M9 9h6v6H9z" {...F} /></Pic></Tool>
                  <Tool aria-label="Modo de pantalla"><Pic w={20} h={20}><path d="M1.500 6h10v8.500h-10z" fill="#606060" strokeWidth="1.200" /><path d="M7.500 4h10.500v8H7.500z" fill="#606060" strokeWidth="1.200" /><path d="M7 3.500h11v2H7z" {...F} /></Pic></Tool>
                  <MoreTools aria-label="Editar barra"><Pic w={16} h={6}><g {...F}><circle cx="3" cy="3" r="1.800" /><circle cx="8" cy="3" r="1.800" /><circle cx="13" cy="3" r="1.800" /></g></Pic></MoreTools>
                </ToolFoot>
              </ToolPanel>
              <CutPanel>
                <PanelHead><Bare aria-label="Cerrar panel"><Cross /></Bare><Bare aria-label="Contraer panel"><Fold /></Bare></PanelHead>
                <Grip $row />
                <CutRow>
                  <CutTool aria-label="Borrador"><Pic w={20} h={20}><path d="M11.500 1l7.500 6-8 9.500-7.500-6z" {...F} /><path d="M4 11l-2.500 3.200L7.500 19l3-3" strokeWidth="1.300" /></Pic></CutTool>
                  <CutTool aria-label="Tijeras"><Pic w={20} h={20}><Scissors /></Pic></CutTool>
                  <CutTool aria-label="Cuchilla"><Pic w={20} h={20}><path d="M9.500 2H20l-7.500 9z" {...F} /><circle cx="14.500" cy="5" r="1.200" fill="#4a4a4a" stroke="none" /><path d="M10 3L2 13.500V18h2l.5-2 2-.5.5-2 2-.5.5-2 2.500-1.500" strokeWidth="1.300" /></Pic></CutTool>
                </CutRow>
              </CutPanel>
            </Canvas>
            <VScroll><ChevronUp /><Thumb /><Chevron /></VScroll>
          </DocArea>
          <StatusBar>
            <StatusPick $w={69}><StatusSelect aria-label="Nivel de zoom"><option>66.9%</option></StatusSelect><Chevron /></StatusPick>
            <StatusNav $w={42}><Pic w={9} h={9}><path d="M1 0h1v9H1zM8 0v9L3 4.500z" {...F} /></Pic><Pic w={6} h={9}><path d="M5 0v9L0 4.500z" {...F} /></Pic></StatusNav>
            <StatusPick $w={57}><StatusSelect aria-label="Mesa de trabajo"><option>1</option></StatusSelect><Chevron /></StatusPick>
            <StatusNav $w={43}><Pic w={6} h={9}><path d="M1 0v9l5-4.500z" {...F} /></Pic><Pic w={9} h={9}><path d="M7 0h1v9H7zM1 0v9l5-4.500z" {...F} /></Pic></StatusNav>
            <StatusTool>Selección</StatusTool>
            <StatusNav $w={20}><Pic w={7} h={10}><path d="M1 0v10l5-5z" fill="#c6c6c6" stroke="none" /></Pic></StatusNav>
            <HScroll><ChevronLeft /><Thumb $wide /><ChevronRight /></HScroll>
            <Corner />
          </StatusBar>
        </DocColumn>
        <Dock>
          <DockHead><Fold /></DockHead>
          {dockGroups.map((g, i) => (
            <DockGroup key={i}>
              <DockGrip $row />
              {g.map(b => <DockButton key={b.name} aria-label={b.name}><Pic w={22} h={22}>{b.art}</Pic></DockButton>)}
            </DockGroup>
          ))}
        </Dock>
      </Body>
      <Brand><Pic w={58} h={40}><path d="M13 .5L29 21.500 45 .5 58 20 42.500 39.500h-27L0 20z" fill="#cf0000" stroke="none" /></Pic></Brand>
    </Screen>
  );
}
